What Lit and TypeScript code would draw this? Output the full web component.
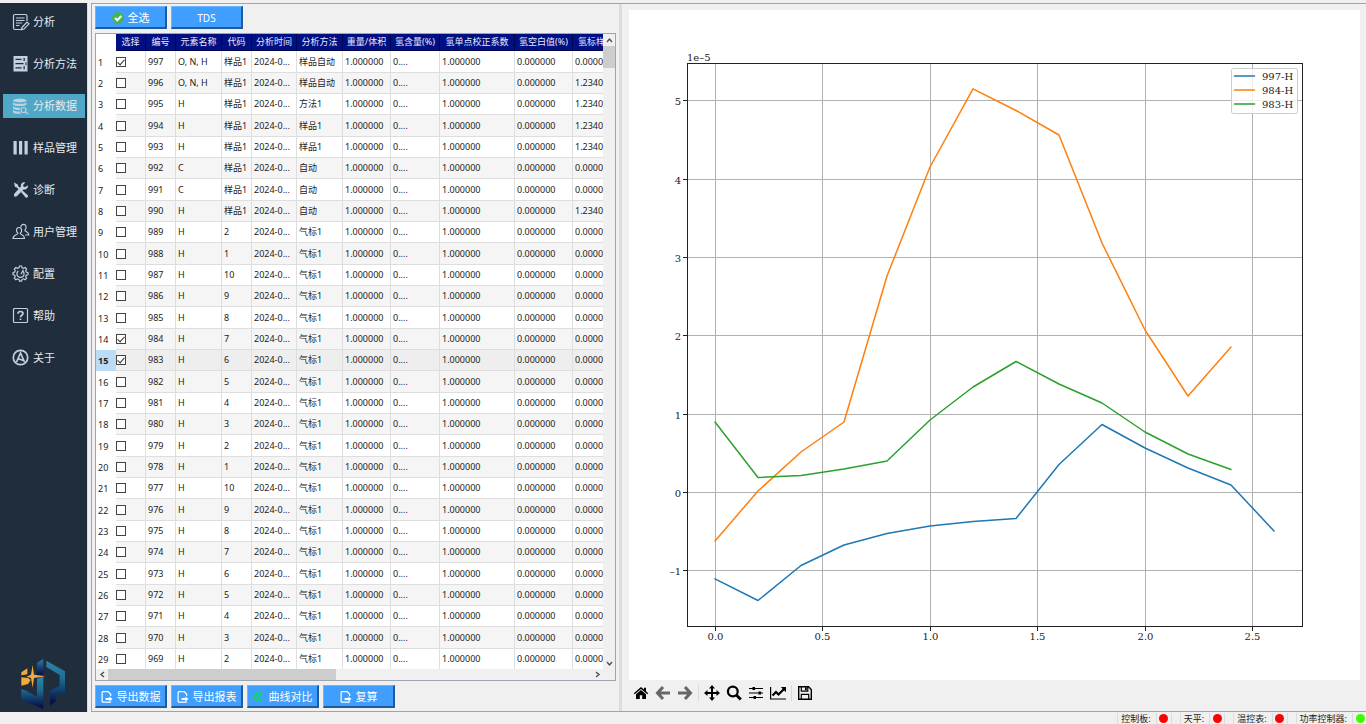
import { LitElement, html, svg, css } from "lit";
import { customElement, state } from "lit/decorators.js";
import { classMap } from "lit/directives/class-map.js";

interface Series {
  name: string;
  color: string;
  values: number[];
}

interface Row {
  id: number;
  element: string;
  code: string;
  method: string;
  std: string;
  checked: boolean;
}

const SERIES: Series[] = [
  {
    name: "997-H",
    color: "#1f77b4",
    values: [-1.1, -1.377, -0.93, -0.669, -0.522, -0.426, -0.369, -0.33, 0.359, 0.869, 0.569, 0.314, 0.097, -0.49],
  },
  {
    name: "984-H",
    color: "#ff7f0e",
    values: [-0.618, 0.02, 0.518, 0.901, 2.765, 4.156, 5.152, 4.877, 4.564, 3.186, 2.075, 1.233, 1.858],
  },
  {
    name: "983-H",
    color: "#2ca02c",
    values: [0.901, 0.193, 0.218, 0.301, 0.403, 0.927, 1.348, 1.673, 1.386, 1.144, 0.773, 0.493, 0.295],
  },
];

const CODES = ["样品1", "样品1", "样品1", "样品1", "样品1", "样品1", "样品1", "样品1",
  "2", "1", "10", "9", "8", "7", "6", "5", "4", "3", "2", "1", "10", "9", "8", "7", "6", "5", "4", "3", "2"];
const METHODS = ["样品自动", "样品自动", "方法1", "样品1", "样品1", "自动", "自动", "自动"];

const ROWS: Row[] = CODES.map((code, i) => ({
  id: 997 - i,
  element: i < 2 ? "O, N, H" : i === 5 || i === 6 ? "C" : "H",
  code,
  method: METHODS[i] ?? "气标1",
  std: (i >= 1 && i <= 4) || i === 7 ? "1.2340" : "0.0000",
  checked: i === 0 || i === 13 || i === 14,
}));

const HEADERS = ["选择", "编号", "元素名称", "代码", "分析时间", "分析方法", "重量/体积", "氢含量(%)", "氢单点校正系数", "氢空白值(%)", "氢标样值(%)"];

const NAV = [
  { label: "分析", icon: svg`<path d="M15 8V3a1.500 1.500 0 0 0-1.500-1.500H3A1.500 1.500 0 0 0 1.500 3v12A1.500 1.500 0 0 0 3 16.500h6"/><path d="M4 5h8.500M4 7.500h8.500M4 10h6M4 12.500h3.500"/><path d="M10 14.500l5-5.500 2 1.800-5 5.200-2.500.6z"/>` },
  { label: "分析方法", icon: svg`<path class="solid" fill-rule="evenodd" d="M1.500 1h14v15.500h-14zM3.500 3.800v1.300h6V3.800zM3.500 8v1.300h8V8zM3.500 12.200v1.300h6v-1.300zM11.500 3v3h1.300V3zM13.500 7.200v3h1v-3zM11.500 11.300v3h1.300v-3z"/>` },
  { label: "分析数据", icon: svg`<path class="solid" d="M1 3.500C1 1 14.500 1 14.500 3.500S1 6 1 3.500zM1 5.300c1.500 2 12 2 13.500 0v2.200C13 9.500 2.500 9.500 1 7.500zM1 9.200c1.500 1.500 5 1.700 7.500 1.500-.8.8-1 1.600-1 2.300-2.500 0-5.500-.3-6.500-1.500zM1 13c1.500 1.300 4.500 1.600 6.800 1.500.3 1 1 1.600 1.600 2C6.500 17 2 16.800 1 15.200z"/><circle cx="11.500" cy="13" r="2.500"/><path d="M13.300 14.800l3 2.400"/>` },
  { label: "样品管理", icon: svg`<path class="solid" d="M1.500 2h3.200v13.500H1.500zM7 2h3.200v13.500H7zM12.500 2h3.200v13.500h-3.200z"/>` },
  { label: "诊断", icon: svg`<path class="solid" d="M2 1.500l3.500 1.700.8 2 2.500 2.500-1.400 1.400-2.600-2.500-1.900-.8zM10.500 9.500l5.300 4.800c.9 1.500-.8 3-2.100 2.100L9 11z"/><path class="solid" d="M15.800 4.200l-2.400 1.900-1.900-.4-.4-1.800L13.300 1.500C10.500.8 8.300 3 9 5.500L2.500 12.500C.8 14.500 3 17 5 15l6.500-6.600c2.500.7 5-1.400 4.300-4.200z"/>` },
  { label: "用户管理", icon: svg`<path d="M6 10.200C3.800 8.500 4 4.500 7 4.500s3.400 4 1.300 5.700c-.5 1.400 4.200 1.400 4.200 5.300H1c0-3.900 5.500-3.900 5-5.300z"/><path d="M8.800 4.500c0-4.300 5.600-4 5.300-.2-.1 1.300-.5 2.200-1.200 3 0 1.400 3.800 1.400 3.900 4.700h-3.500"/>` },
  { label: "配置", icon: svg`<path d="M7.500 1h2l.6 1.800 1.300.6 1.800-.9 1.400 1.500-.9 1.700.5 1.300 1.800.6v2l-1.800.6-.5 1.300.9 1.700-1.400 1.500-1.800-.9-1.300.6L9.500 16.200h-2l-.6-1.800-1.300-.6-1.800.9-1.500-1.500.9-1.700-.5-1.300L1 9.600v-2L2.700 7l.5-1.300-.9-1.700 1.500-1.500 1.800.9 1.300-.6z"/><path d="M6.300 6a3.600 3.600 0 1 0 4.700.3M9 9.200l2.300-4.500"/>` },
  { label: "帮助", icon: svg`<rect x="1.500" y="1.500" width="14" height="14" rx="1"/><path class="thick" d="M6 6.800c0-3 5-3 5-.2 0 1.700-2.500 1.700-2.500 3.600M8.500 11.600v1.500"/>` },
  { label: "关于", icon: svg`<circle class="thick" cx="8.500" cy="8.500" r="7.200"/><path class="thick" d="M4.500 13l4-9 4 9M5.800 9.500l5.500 2"/>` },
];

const EXPORT_ICON = html`<svg class="bicon" viewBox="0 0 13 14"><path d="M10.500 6V4L7.800 1.200H2.200c-.6 0-1 .4-1 1v9.400c0 .6.4 1 1 1h7.300c.6 0 1-.4 1-1" fill="none" stroke="#fff" stroke-width="1.300"/><path d="M5 8.200h4V6.500l3.500 2.700L9 12v-1.800H5z" fill="#fff"/></svg>`;

/** Result curves drawn over a fixed grid, scaled with the panel. */
@customElement("curve-chart")
class CurveChart extends LitElement {
  static styles = css`
    :host { display: block; background: #fff; min-height: 0; min-width: 0; }
    .plot { display: block; width: 100%; height: 100%; }
    .label { font: 10px "DejaVu Serif", serif; fill: #222; }
    .end { text-anchor: end; }
    .mid { text-anchor: middle; }
    .grid { stroke: #b0b0b0; stroke-width: 1; }
    .tick { stroke: #222; stroke-width: 1; }
    .axes { fill: none; stroke: #222; stroke-width: 1; }
    .legend { fill: #fff; fill-opacity: 0.8; stroke: #ccc; }
    .curve { fill: none; stroke-width: 1.5; stroke-linejoin: round; stroke-linecap: round; }
  `;

  private x(v: number) { return 86 + v * 215; }
  private y(v: number) { return 482.6 - v * 78.35; }

  render() {
    const xs = [0, 0.5, 1, 1.5, 2, 2.5];
    const ys = [5, 4, 3, 2, 1, 0, -1];
    return html`<svg class="plot" viewBox="0 0 731 670" role="img" aria-label="曲线">
      ${xs.map((v) => {
        const p = Math.floor(this.x(v)) + 0.5;
        return svg`<path class="grid" d="M${p} 54V617"/><path class="tick" d="M${p} 617v4"/>
          <text class="label mid" x=${p} y="630">${v.toFixed(1)}</text>`;
      })}
      ${ys.map((v) => {
        const p = Math.floor(this.y(v)) + 0.5;
        return svg`<path class="grid" d="M58 ${p}H673"/><path class="tick" d="M54 ${p}h4"/>
          <text class="label end" x="52" y=${p + 4}>${v < 0 ? "–" + -v : v}</text>`;
      })}
      ${SERIES.map((s) => svg`<polyline class="curve" stroke=${s.color}
        points=${s.values.map((v, i) => `${this.x(i * 0.2).toFixed(1)},${this.y(v).toFixed(1)}`).join(" ")}/>`)}
      <rect class="axes" x="58.5" y="53.500" width="615" height="563" />
      <text class="label" x="58" y="51">1e–5</text>
      <rect class="legend" x="602.5" y="58.500" width="66" height="45" rx="2" />
      ${SERIES.map((s, i) => svg`<path class="curve" stroke=${s.color} d="M605.500 ${66 + i * 14}h20"/>
        <text class="label" x="633" y=${70 + i * 14}>${s.name}</text>`)}
    </svg>`;
  }
}

@customElement("result-table")
class ResultTable extends LitElement {
  static styles = css`
    :host {
      display: grid; grid-template: minmax(0, 1fr) 11px / minmax(0, 1fr) 12px;
      border: 1px solid #a0a4ae; background: #f0f0f0; min-height: 0; min-width: 0;
    }
    .view { overflow: hidden; background: #fff; }
    table { table-layout: fixed; width: 537px; border-collapse: separate; border-spacing: 0; font-size: 9px; line-height: 12px; color: #222; }
    .c20 { width: 20px; } .c30 { width: 30px; } .c45 { width: 45px; } .c46 { width: 46px; }
    .c48 { width: 48px; } .c49 { width: 49px; } .c58 { width: 58px; } .c60 { width: 60px; } .c75 { width: 75px; }
    th, td { padding: 0; box-sizing: border-box; white-space: nowrap; overflow: hidden; text-align: left; font-weight: 400; }
    .head th { height: 17px; background: #000f82; color: #e8eaff; text-align: center; border-right: 1px solid #00064e; border-bottom: 1px solid #00064e; }
    .head .corner { background: #fff; border: 0; }
    .row { height: 21px; }
    .row:nth-child(3n + 1) { height: 22px; }
    .row td { border-right: 1px solid #dedede; border-bottom: 1px solid #dedede; padding: 0 0 0 2px; }
    .row .pick { padding: 0; }
    .row:nth-child(even) td { background: #f5f5f5; }
    .row.current td { background: #eee; }
    .num { padding: 1px 0 0 2px; }
    .current .num { background: #bbdcf5; font-weight: 700; }
    .box {
      appearance: none; display: block; box-sizing: border-box; width: 10px; height: 10px; margin: 0;
      border: 1px solid #444; background: #fff;
    }
    .box:checked::after {
      content: ""; display: block; box-sizing: border-box; width: 4px; height: 7px; margin: 0 0 0 2px;
      border: solid #333; border-width: 0 1px 1px 0; rotate: 42deg;
    }
    .vbar, .hbar { display: flex; }
    .vbar { flex-direction: column; }
    .arrow { flex: none; width: 12px; height: 12px; padding: 0; border: 0; background: none; display: grid; place-items: center; }
    .hbar .arrow { height: 11px; }
    .arrow svg { width: 7px; height: 7px; fill: none; stroke: #505050; stroke-width: 1.4; }
    .vthumb { height: 22px; background: #cdcdcd; }
    .hthumb { width: 45%; background: #cdcdcd; }
    .space { flex: 1; }
  `;

  @state() private rows = ROWS;

  private toggle(index: number) {
    this.rows = this.rows.map((r, i) => (i === index ? { ...r, checked: !r.checked } : r));
  }

  private arrow(label: string, d: string) {
    return html`<button class="arrow" aria-label=${label}><svg viewBox="0 0 7 7"><path d=${d} /></svg></button>`;
  }

  render() {
    const cols = [20, 30, 30, 46, 30, 45, 46, 48, 49, 75, 58, 60];
    return html`
      <div class="view">
        <table>
          <colgroup>${cols.map((c) => html`<col class="c${c}" />`)}</colgroup>
          <thead><tr class="head"><td class="corner"></td>${HEADERS.map((h) => html`<th scope="col">${h}</th>`)}</tr></thead>
          <tbody>
            ${this.rows.map((r, i) => html`<tr class=${classMap({ row: true, current: i === 14 })}>
              <th class="num" scope="row">${i + 1}</th>
              <td class="pick"><input class="box" type="checkbox" aria-label=${`选择 ${r.id}`} .checked=${r.checked} @change=${() => this.toggle(i)} /></td>
              <td>${r.id}</td><td>${r.element}</td><td>${r.code}</td><td>2024-0...</td><td>${r.method}</td>
              <td>1.000000</td><td>0....</td><td>1.000000</td><td>0.000000</td><td>${r.std}</td>
            </tr>`)}
          </tbody>
        </table>
      </div>
      <div class="vbar">
        ${this.arrow("向上", "M1 5l2.500-3L6 5")}<div class="vthumb"></div><div class="space"></div>${this.arrow("向下", "M1 2l2.500 3L6 2")}
      </div>
      <div class="hbar">
        ${this.arrow("向左", "M5 1L2 3.500 5 6")}<div class="hthumb"></div><div class="space"></div>${this.arrow("向右", "M2 1l3 2.500L2 6")}
      </div>
      <div></div>`;
  }
}

@customElement("app-root")
class AppRoot extends LitElement {
  static styles = css`
    :host {
      display: flex; flex-direction: column; height: 100vh; box-sizing: border-box; padding-top: 3px; overflow: hidden;
      background: #f0f0f0; font-family: "Noto Sans", "Noto Sans CJK SC", sans-serif; color: #222;
    }
    button { font-family: inherit; }
    .main { flex: 1; min-height: 0; display: flex; gap: 3px; }
    .side { flex: none; width: 87px; display: flex; flex-direction: column; background: #202d3d; border-right: 1px solid #dadada; }
    .nav { flex: 1; display: flex; flex-direction: column; gap: 18px; padding: 7px 2px 0 3px; }
    .item {
      display: flex; align-items: center; gap: 3px; height: 24px; padding: 0 0 0 9px; border: 0; background: none;
      color: #e6eaee; font-size: 11px; line-height: 16px; white-space: nowrap;
    }
    .item.active { background: #4fa8c8; }
    .nicon { flex: none; width: 18px; height: 18px; fill: none; stroke: #c3d0de; stroke-width: 1.2; }
    .nicon .solid { fill: #c3d0de; stroke: none; }
    .nicon .thick { stroke-width: 1.7; }
    .logo { width: 47px; height: 50px; margin: 0 0 3px 20px; }
    .work {
      flex: 1; min-width: 0; display: grid; grid-template-columns: minmax(0, 527fr) 3px minmax(0, 744fr);
      grid-template-rows: minmax(0, 1fr);
      border: solid #a0a4aa; border-width: 1px 0 1px 1px;
    }
    .left { display: flex; flex-direction: column; gap: 4px; padding: 2px 3px 3px; }
    .left result-table { flex: 1; }
    .bar { display: flex; gap: 4px; }
    .btn {
      display: flex; align-items: center; justify-content: center; gap: 4px; box-sizing: border-box; width: 72px; height: 23px; padding: 1px 0 0;
      border: solid; border-width: 1px 2px 2px 1px; border-color: #6db5ff #1f5c9c #1f5c9c #6db5ff;
      background: #409eff; color: #fff; font-size: 11px; line-height: 16px; white-space: nowrap;
    }
    .btn.small { font-size: 10px; }
    .bicon { flex: none; width: 12px; height: 14px; }
    .split { background: #dcdcdc; }
    .right { display: flex; flex-direction: column; padding: 6px 6px 0 7px; }
    .right curve-chart { flex: 1; }
    .tools { display: flex; align-items: center; height: 26px; padding: 0 0 5px 3px; gap: 4px; }
    .tool { display: grid; place-items: center; width: 18px; height: 18px; padding: 0; border: 0; background: none; color: #000; }
    .tool.off { color: #666; }
    .tool svg { width: 16px; height: 16px; }
    .rule { width: 1px; height: 16px; background: #dadada; }
    .status { flex: none; display: flex; justify-content: flex-end; gap: 8px; height: 12px; margin-right: -2px; font-size: 9px; line-height: 11px; }
    .state { display: flex; border-left: 1px solid #dcdcdc; height: 11px; margin-top: 1px; }
    .name { padding: 0 5px 0 3px; white-space: nowrap; }
    .lamp { display: grid; place-items: center; width: 14px; border: solid #dcdcdc; border-width: 0 1px; }
    .dot { width: 9px; height: 9px; border-radius: 50%; background: #f00; }
    .dot.ok { background: #3bff00; }
  `;

  @state() private active = "分析数据";

  private tool(label: string, shape: unknown, off = false) {
    return html`<button class=${classMap({ tool: true, off })} aria-label=${label}><svg viewBox="0 0 16 16">${shape}</svg></button>`;
  }

  render() {
    return html`
      <div class="main">
        <aside class="side">
          <nav class="nav">
            ${NAV.map((n) => html`<button class=${classMap({ item: true, active: n.label === this.active })} @click=${() => (this.active = n.label)}>
              <svg class="nicon" viewBox="0 0 18 18">${n.icon}</svg><span>${n.label}</span></button>`)}
          </nav>
          <svg class="logo" viewBox="0 0 141 150" aria-label="logo">
            <defs>
              <linearGradient id="a" x1="0" y1="0" x2="0" y2="1"><stop offset="0" stop-color="#2b7fa5" /><stop offset="1" stop-color="#05094a" /></linearGradient>
              <linearGradient id="b" x1="0" y1="0" x2="0" y2="1"><stop offset="0" stop-color="#2e86ab" /><stop offset="0.4" stop-color="#1f6c94" /><stop offset="1" stop-color="#030541" /></linearGradient>
            </defs>
            <path fill="url(#a)" d="M51 11L70 0v46l-19 3z" />
            <path fill="url(#b)" d="M51 59l19-7v98L4 122V90l18 7 29 17z" />
            <path fill="url(#b)" d="M79 5l56 32v71l-15-5-13 5v20l-17 11V96l29-16V48L79 24z" />
            <path fill="#f0ab3c" d="M4 40l18-12v18l-18 3zM4 55l20 2 8 6-8 12-20 5zM38 18l4 29 34 5-34 5-4 29-5-29-14-4 14-6z" />
          </svg>
        </aside>
        <section class="work">
          <div class="left">
            <div class="bar">
              <button class="btn"><svg class="bicon" viewBox="0 0 12 14"><circle cx="6" cy="7" r="6" fill="#43b35a" /><path d="M3 7l2.300 2.300L9.300 5" fill="none" stroke="#fff" stroke-width="2" /></svg>全选</button>
              <button class="btn small">TDS</button>
            </div>
            <result-table></result-table>
            <div class="bar">
              <button class="btn">${EXPORT_ICON}导出数据</button>
              <button class="btn">${EXPORT_ICON}导出报表</button>
              <button class="btn"><svg class="bicon" viewBox="0 0 12 14"><path d="M5 2L1 7l4 5M9 2L5 7l4 5" fill="none" stroke="#0be04f" stroke-width="1.800" /></svg>曲线对比</button>
              <button class="btn">${EXPORT_ICON}复算</button>
            </div>
          </div>
          <div class="split"></div>
          <div class="right">
            <curve-chart></curve-chart>
            <div class="tools">
              ${this.tool("主页", svg`<path d="M8 2L.8 8.200l.9 1L8 3.900l6.300 5.300.9-1L13 6.300V2.800h-2v1.800zM8 5L3 9.200V14h3.800v-3.700h2.400V14H13V9.200z" fill="currentColor"/>`)}
              ${this.tool("后退", svg`<path d="M8 2L2.500 8 8 14M3 8h12" fill="none" stroke="currentColor" stroke-width="3"/>`, true)}
              ${this.tool("前进", svg`<path d="M8 2l5.500 6L8 14M13 8H1" fill="none" stroke="currentColor" stroke-width="3"/>`, true)}
              <span class="rule"></span>
              ${this.tool("平移", svg`<path d="M8 0l3 3.500H9V7h3.500V5L16 8l-3.500 3V9H9v3.500h2L8 16l-3-3.500h2V9H3.500v2L0 8l3.500-3v2H7V3.500H5z" fill="currentColor"/>`)}
              ${this.tool("缩放", svg`<circle cx="6.800" cy="6.500" r="4.900" fill="none" stroke="currentColor" stroke-width="2.200"/><path d="M10.300 10l4.500 4.500" stroke="currentColor" stroke-width="2.800"/>`)}
              ${this.tool("子图", svg`<path d="M1 3.500h14M1 8h14M1 12.500h14" stroke="currentColor" stroke-width="1.200"/><path d="M4.500 2h2.500v3H4.500zM10.500 6.500H13v3h-2.500zM5.500 11H8v3H5.500z" fill="currentColor"/>`)}
              ${this.tool("参数", svg`<path d="M.6 2v12H16" fill="none" stroke="currentColor" stroke-width="1.200"/><path d="M2.500 10.500L6 7l2.500 2.500L14 4" fill="none" stroke="currentColor" stroke-width="2.200"/><path d="M10.800 2H16v5.200z" fill="currentColor"/>`)}
              <span class="rule"></span>
              ${this.tool("保存", svg`<path d="M1.700 1.700h9.800l2.800 2.800v9.800H1.700z" fill="none" stroke="currentColor" stroke-width="1.400"/><path d="M4.300 14V9.300h7.400V14M4.300 2v4.200h6.500V2" fill="none" stroke="currentColor" stroke-width="1.200"/><path d="M8 2.300h1.800v3H8z" fill="currentColor"/>`)}
            </div>
          </div>
        </section>
      </div>
      <footer class="status">
        ${["控制板:", "天平:", "温控表:", "功率控制器:"].map((n, i) => html`<div class="state"><span class="name">${n}</span><span class="lamp"><i class=${classMap({ dot: true, ok: i === 3 })}></i></span></div>`)}
      </footer>`;
  }
}
